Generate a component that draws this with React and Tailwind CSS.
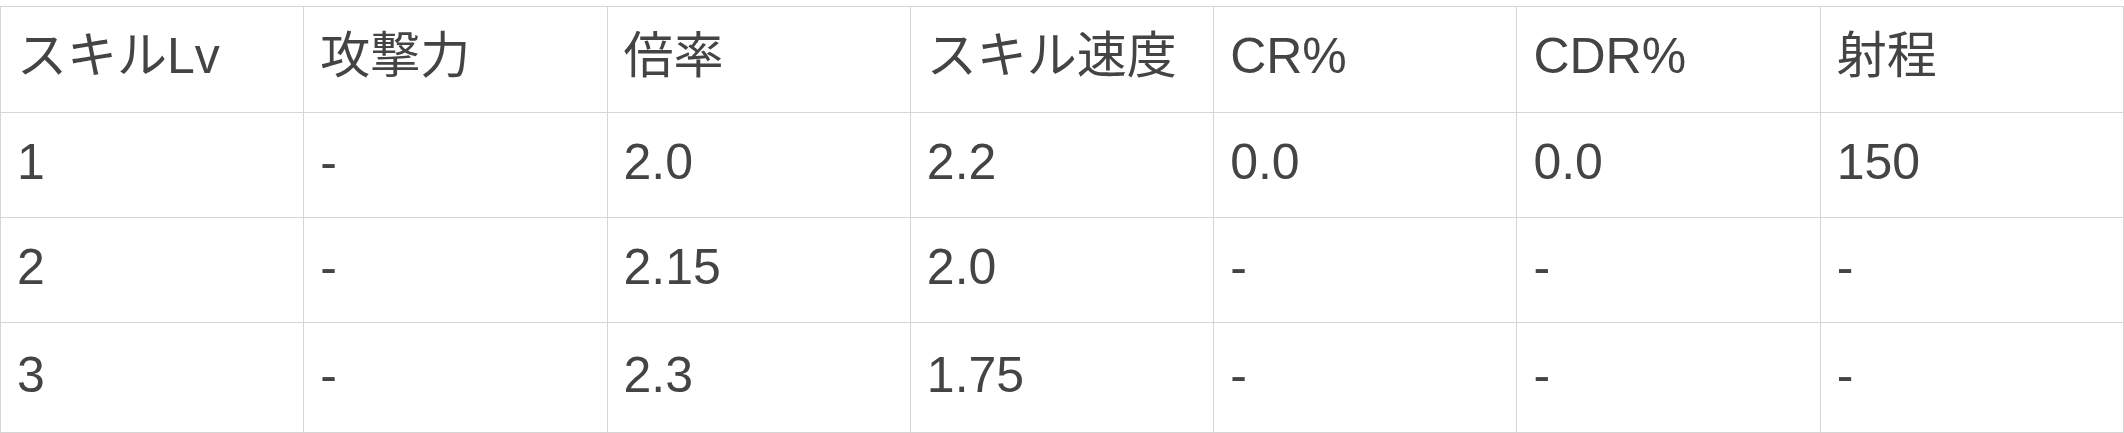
import React from 'react';

const headers = ['スキルLv', '攻撃力', '倍率', 'スキル速度', 'CR%', 'CDR%', '射程'];

const rows = [
  ['1', '-', '2.0', '2.2', '0.0', '0.0', '150'],
  ['2', '-', '2.15', '2.0', '-', '-', '-'],
  ['3', '-', '2.3', '1.75', '-', '-', '-'],
];

export default function App() {
  return (
    <div className="bg-white pt-[6px] font-['Liberation_Sans','Noto_Sans_CJK_JP',sans-serif] text-[#444444]">
      <table className="w-full table-fixed border-collapse text-[50px] leading-none">
        <thead>
          <tr className="h-[106px]">
            {headers.map((h) => (
              <th key={h} className="border border-[#d6d6d6] px-[16px] pb-[8px] text-left align-middle font-normal whitespace-nowrap">
                {h}
              </th>
            ))}
          </tr>
        </thead>
        <tbody>
          {rows.map((r, i) => (
            <tr key={i} className={i === rows.length - 1 ? 'h-[110px]' : 'h-[105px]'}>
              {r.map((c, j) => (
                <td key={j} className="border border-[#d6d6d6] px-[16px] pb-[6px] text-left align-middle">
                  {c}
                </td>
              ))}
            </tr>
          ))}
        </tbody>
      </table>
    </div>
  );
}
